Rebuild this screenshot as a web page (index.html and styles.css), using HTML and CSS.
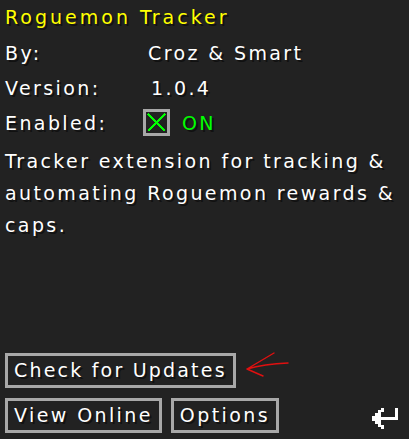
FILE: index.html
```html
<!DOCTYPE html>
<html>
<head>
<meta charset="utf-8">
<link rel="stylesheet" href="styles.css">
</head>
<body>
<div class="screen">
  <div class="title">Roguemon Tracker</div>
  <div class="info">
    <div class="label">By:</div><div class="value">Croz &amp; Smart</div>
    <div class="label">Version:</div><div class="value version">1.0.4</div>
    <div class="label">Enabled:</div>
    <div class="value enabled">
      <span class="checkbox">
        <svg width="21" height="21" viewBox="0 0 21 21" shape-rendering="crispEdges">
          <path d="M2 2 L19 19 M19 2 L2 19" stroke="#00ff00" stroke-width="2.4" fill="none"/>
        </svg>
      </span>
      <span class="on">ON</span>
    </div>
  </div>
  <p class="desc">Tracker extension for tracking &amp; automating Roguemon rewards &amp; caps.</p>
  <div class="buttons">
    <div class="row">
      <button class="btn btn-updates">Check for Updates</button>
      <svg class="annot" width="50" height="30" viewBox="0 0 50 30">
        <path d="M3 17 L30 1 M3 17 Q20 12 44 11 M3 17 L19 24" stroke="#e01010" stroke-width="1.4" fill="none" stroke-linecap="round"/>
      </svg>
    </div>
    <div class="row">
      <button class="btn">View Online</button>
      <button class="btn">Options</button>
      <svg class="back" width="30" height="26" viewBox="0 0 30 26" shape-rendering="crispEdges">
        <g fill="#ffffff">
          <rect x="24" y="3" width="3" height="12"/>
          <rect x="10" y="12" width="17" height="3"/>
          <rect x="1" y="11" width="3" height="5"/>
          <rect x="4" y="8" width="3" height="11"/>
          <rect x="7" y="5" width="3" height="17"/>
          <rect x="10" y="3" width="3" height="4"/>
          <rect x="10" y="20" width="3" height="4"/>
        </g>
      </svg>
    </div>
  </div>
</div>
</body>
</html>
```
FILE: styles.css
```css
html, body {
  margin: 0;
  padding: 0;
  background: #222222;
}
body {
  width: 409px;
  height: 439px;
  overflow: hidden;
}
.screen {
  box-sizing: border-box;
  height: 439px;
  padding: 0 5px 6px 5px;
  display: flex;
  flex-direction: column;
  font-family: "DejaVu Sans", sans-serif;
  font-size: 19px;
  letter-spacing: 2.4px;
  color: #ffffff;
  text-shadow: 2px 2px 0 #111111;
}
.title {
  color: #ffff00;
  line-height: 35px;
  height: 35px;
  letter-spacing: 3px;
}
.info {
  display: grid;
  grid-template-columns: 142px 1fr;
  grid-auto-rows: 35px;
  align-items: center;
}
.value {
  padding-left: 1px;
}
.version {
  padding-left: 4px;
}
.enabled {
  display: flex;
  align-items: center;
  gap: 12px;
  margin-left: -4px;
  padding-left: 0;
}
.checkbox {
  width: 21px;
  height: 21px;
  border: 3px solid #a8a8a8;
  display: block;
}
.checkbox svg {
  display: block;
}
.on {
  color: #00ff00;
}
.desc {
  margin: 5px 0 0 0;
  line-height: 32px;
  flex: 1;
}
.buttons {
  display: flex;
  flex-direction: column;
  gap: 10px;
}
.row {
  display: flex;
  align-items: center;
  gap: 9px;
  position: relative;
}
.btn {
  box-sizing: border-box;
  height: 35px;
  padding: 0 6px;
  background: #222222;
  border: 3px solid #a8a8a8;
  color: #ffffff;
  font: inherit;
  letter-spacing: inherit;
  text-shadow: inherit;
  line-height: 29px;
  margin: 0;
}
.btn-updates {
  letter-spacing: 2.2px;
}
.annot {
  margin-left: -1px;
  margin-top: -8px;
}
.back {
  margin-left: auto;
  margin-right: 3px;
  margin-top: 4px;
}
```
